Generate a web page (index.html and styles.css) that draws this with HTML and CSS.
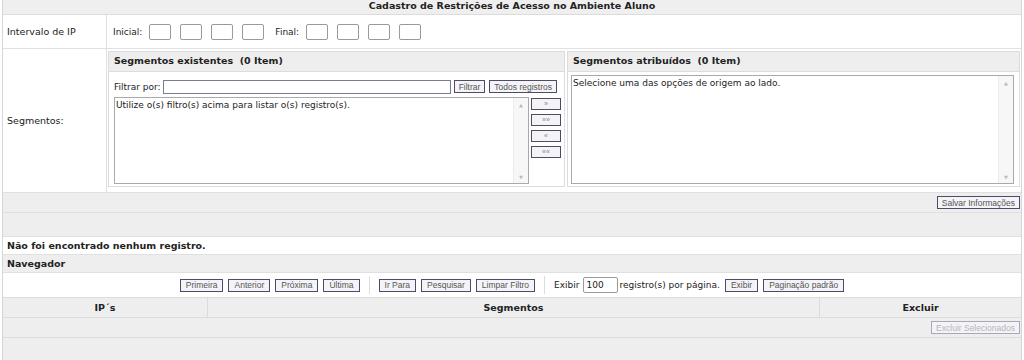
FILE: index.html
```html
<!DOCTYPE html>
<html lang="pt-BR">
<head>
    <meta charset="UTF-8">
    <title>Cadastro de Restrições de Acesso no Ambiente Aluno</title>
    <link rel="stylesheet" href="styles.css">
</head>
<body>
    <div class="page">
        <div class="title">Cadastro de Restrições de Acesso no Ambiente Aluno</div>

        <div class="form-row ip-row">
            <div class="label">Intervalo de IP</div>
            <div class="field ip-field">
                <span class="ip-label">Inicial:</span>
                <span class="ip-box"></span><span class="ip-box"></span><span class="ip-box"></span><span class="ip-box"></span>
                <span class="ip-label final">Final:</span>
                <span class="ip-box"></span><span class="ip-box"></span><span class="ip-box"></span><span class="ip-box"></span>
            </div>
        </div>

        <div class="form-row seg-row">
            <div class="label">Segmentos:</div>
            <div class="field seg-field">
                <div class="panel">
                    <div class="panel-head">Segmentos existentes &nbsp;(0 Item)</div>
                    <div class="panel-body">
                        <div class="filter">
                            <span class="filter-label">Filtrar por:</span>
                            <span class="filter-input"></span>
                            <button class="btn">Filtrar</button>
                            <button class="btn">Todos registros</button>
                        </div>
                        <div class="list-area">
                            <div class="listbox short">
                                <div class="list-text">Utilize o(s) filtro(s) acima para listar o(s) registro(s).</div>
                                <div class="scroll"><span>&#9650;</span><span>&#9660;</span></div>
                            </div>
                            <div class="movers">
                                <button class="btn mover">&raquo;</button>
                                <button class="btn mover">&raquo;&raquo;</button>
                                <button class="btn mover">&laquo;</button>
                                <button class="btn mover">&laquo;&laquo;</button>
                            </div>
                        </div>
                    </div>
                </div>
                <div class="panel">
                    <div class="panel-head">Segmentos atribuídos &nbsp;(0 Item)</div>
                    <div class="panel-body right">
                        <div class="listbox tall">
                            <div class="list-text">Selecione uma das opções de origem ao lado.</div>
                            <div class="scroll"><span>&#9650;</span><span>&#9660;</span></div>
                        </div>
                    </div>
                </div>
            </div>
        </div>

        <div class="bar save-bar"><button class="btn">Salvar Informações</button></div>
        <div class="bar empty-bar"></div>

        <div class="msg">Não foi encontrado nenhum registro.</div>
        <div class="bar nav-title">Navegador</div>

        <div class="nav">
            <button class="btn">Primeira</button>
            <button class="btn">Anterior</button>
            <button class="btn">Próxima</button>
            <button class="btn">Última</button>
            <span class="sep"></span>
            <button class="btn">Ir Para</button>
            <button class="btn">Pesquisar</button>
            <button class="btn">Limpar Filtro</button>
            <span class="sep"></span>
            <span class="nav-text">Exibir</span>
            <span class="page-size">100</span>
            <span class="nav-text">registro(s) por página.</span>
            <button class="btn">Exibir</button>
            <button class="btn">Paginação padrão</button>
        </div>

        <div class="grid-head">
            <div class="col-ip">IP´s</div>
            <div class="col-seg">Segmentos</div>
            <div class="col-del">Excluir</div>
        </div>
        <div class="grid-foot"><button class="btn disabled">Excluir Selecionados</button></div>
    </div>
</body>
</html>
```

FILE: styles.css
```css
body {
    margin: 0;
    padding: 0;
    font-family: 'DejaVu Sans', Verdana, sans-serif;
    font-size: 9px;
    color: #222;
    background: #fff;
}
.page {
    margin-left: 2px;
    margin-right: 2px;
    border-left: 1px solid #d6d6d6;
    border-right: 1px solid #d6d6d6;
    background: #eeeeee;
    min-height: 360px;
}
.title {
    height: 14px;
    line-height: 12px;
    text-align: center;
    font-weight: bold;
    font-size: 9.5px;
    background: #efefef;
    border-bottom: 1px solid #dcdcdc;
}
.form-row {
    display: flex;
    background: #fff;
    border-bottom: 1px solid #e0e0e0;
}
.label {
    width: 99px;
    padding-left: 4px;
    border-right: 1px solid #e0e0e0;
    display: flex;
    align-items: center;
    font-size: 9.5px;
}
.ip-row {
    height: 33px;
}
.ip-field {
    display: flex;
    align-items: center;
    padding-left: 6px;
}
.ip-label {
    margin-right: 7px;
}
.ip-label.final {
    margin-left: 2px;
}
.ip-box {
    width: 20px;
    height: 14px;
    border: 1px solid #9a9a9a;
    border-radius: 2px;
    margin-right: 9px;
    background: #fff;
}
.seg-row {
    height: 143px;
}
.seg-field {
    flex: 1;
    display: flex;
    gap: 2px;
    padding: 2px 1px 5px 1px;
}
.panel {
    flex: 1;
    border: 1px solid #dcdcdc;
    display: flex;
    flex-direction: column;
}
.panel-head {
    height: 19px;
    line-height: 18px;
    padding-left: 5px;
    font-weight: bold;
    font-size: 9.5px;
    background: #eeeeee;
    border-bottom: 1px solid #dcdcdc;
}
.panel-body {
    flex: 1;
    padding: 4px 3px 2px 5px;
    display: flex;
    flex-direction: column;
}
.panel-body.right {
    padding: 3px 5px 2px 3px;
}
.filter {
    display: flex;
    align-items: center;
    height: 15px;
    margin-top: 3px;
    margin-bottom: 3px;
}
.filter-label {
    margin-right: 2px;
}
.filter-input {
    width: 286px;
    height: 12px;
    border: 1px solid #777a99;
    background: #fff;
    margin-right: 3px;
}
.filter .btn {
    margin-right: 4px;
}
.list-area {
    display: flex;
    flex: 1;
}
.listbox {
    display: flex;
    border: 1px solid #a9a9a9;
    background: #fff;
}
.listbox.short {
    width: 413px;
    height: 85px;
}
.listbox.tall {
    flex: 1;
    height: 107px;
}
.list-text {
    flex: 1;
    padding: 2px 1px;
}
.scroll {
    width: 14px;
    display: flex;
    flex-direction: column;
    justify-content: space-between;
    align-items: center;
    background: #f7f7f7;
    border-left: 1px solid #ececec;
    color: #bbb;
    font-size: 5px;
    padding: 4px 0 3px;
}
.movers {
    display: flex;
    flex-direction: column;
    gap: 4px;
    margin-left: 2px;
    padding-top: 1px;
}
.btn {
    font-family: 'Liberation Sans', Arial, sans-serif;
    font-size: 8.5px;
    color: #555;
    background: #f4f4f8;
    border: 1px solid #4e4b66;
    height: 13px;
    padding: 0 4px;
    line-height: 10px;
    margin: 0;
}
.mover {
    width: 30px;
    height: 12px;
    font-size: 7px;
    color: #888;
    padding: 0;
}
.bar {
    background: #eeeeee;
    border-bottom: 1px solid #e0e0e0;
}
.save-bar {
    height: 19px;
    display: flex;
    justify-content: flex-end;
    align-items: center;
    padding-right: 1px;
}
.empty-bar {
    height: 23px;
}
.msg {
    height: 17px;
    line-height: 17px;
    padding-left: 4px;
    font-weight: bold;
    font-size: 9.5px;
    background: #fff;
    border-bottom: 1px solid #e0e0e0;
}
.nav-title {
    height: 17px;
    line-height: 17px;
    padding-left: 4px;
    font-weight: bold;
    font-size: 9.5px;
}
.nav {
    height: 24px;
    background: #fff;
    border-bottom: 1px solid #dcdcdc;
    display: flex;
    align-items: center;
    justify-content: center;
    gap: 5px;
}
.nav .btn {
    padding: 0 5px;
}
.sep {
    width: 1px;
    height: 18px;
    background: #dcdcdc;
    margin: 0 4px;
}
.nav-text {
    font-size: 9px;
}
.page-size {
    width: 30px;
    height: 14px;
    line-height: 14px;
    border: 1px solid #9a9a9a;
    border-radius: 2px;
    padding-left: 3px;
    margin: 0 -3px 0 -2px;
    font-size: 9px;
}
.grid-head {
    display: grid;
    grid-template-columns: 204px 1fr 202px;
    height: 19px;
    line-height: 19px;
    text-align: center;
    font-weight: bold;
    font-size: 9.5px;
    border-bottom: 1px solid #dcdcdc;
}
.grid-head div + div {
    border-left: 1px solid #dcdcdc;
}
.grid-foot {
    height: 19px;
    display: flex;
    justify-content: flex-end;
    align-items: center;
    padding-right: 1px;
    border-bottom: 1px solid #dcdcdc;
}
.btn.disabled {
    color: #b5b5b5;
    border-color: #a8a8b8;
}
```
